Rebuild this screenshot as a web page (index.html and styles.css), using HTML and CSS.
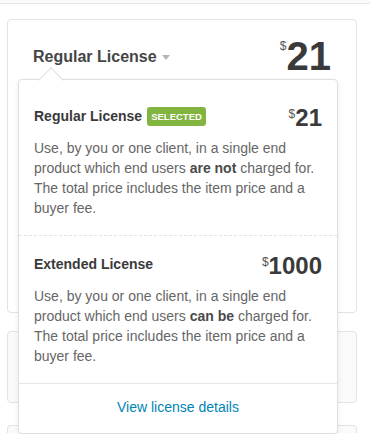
FILE: index.html
```html
<!DOCTYPE html>
<html lang="en">
<head>
    <meta charset="UTF-8">
    <meta name="viewport" content="width=device-width, initial-scale=1.0">
    <title>License picker</title>
    <link rel="stylesheet" href="styles.css">
</head>
<body>
    <div class="topbar"></div>
    <div class="page">
        <div class="card purchase">
            <div class="purchase-head">
                <div class="license-name">Regular License <span class="caret"></span></div>
                <div class="price big"><span class="cur">$</span>21</div>
            </div>
        </div>
        <div class="card muted first"></div>
        <div class="card muted last"></div>

        <!-- dropdown is open over the cards -->
        <div class="dropdown">
            <div class="option dashed">
                <div class="option-head">
                    <div class="option-title">Regular License <span class="badge">SELECTED</span></div>
                    <div class="price"><span class="cur">$</span>21</div>
                </div>
                <p class="option-desc">Use, by you or one client, in a single end product which end users <strong>are not</strong> charged for. The total price includes the item price and a buyer fee.</p>
            </div>
            <div class="option solid">
                <div class="option-head">
                    <div class="option-title">Extended License</div>
                    <div class="price"><span class="cur">$</span>1000</div>
                </div>
                <p class="option-desc">Use, by you or one client, in a single end product which end users <strong>can be</strong> charged for. The total price includes the item price and a buyer fee.</p>
            </div>
            <div class="dropdown-foot">
                <a href="#">View license details</a>
            </div>
        </div>
    </div>
</body>
</html>
```

FILE: styles.css
```css
* {
    box-sizing: border-box;
    margin: 0;
    padding: 0;
}
body {
    font-family: 'Liberation Sans', Arial, sans-serif;
    background: #ffffff;
    color: #454545;
    width: 370px;
    height: 434px;
    overflow: hidden;
}
.topbar {
    height: 4px;
    background: #fafafa;
    border-bottom: 1px solid #e8e8e8;
}
.page {
    position: relative;
    padding: 15px 13px 0 7px;
}
.card {
    border: 1px solid #dfe4ea;
    border-radius: 4px;
    background: #ffffff;
}
.purchase {
    height: 294px;
    padding: 16px 25px 0 25px;
}
.purchase-head {
    display: flex;
    justify-content: space-between;
    align-items: flex-start;
}
.license-name {
    font-size: 16px;
    font-weight: bold;
    line-height: 20px;
    margin-top: 11px;
    color: #454545;
}
.caret {
    display: inline-block;
    width: 0;
    height: 0;
    border-left: 4.5px solid transparent;
    border-right: 4.5px solid transparent;
    border-top: 5px solid #b5b5b5;
    margin-left: 1px;
    vertical-align: 2px;
}
.price {
    display: flex;
    align-items: flex-start;
    font-size: 24px;
    font-weight: bold;
    line-height: 24px;
    color: #3a3a3a;
}
.price .cur {
    font-size: 12px;
    font-weight: normal;
    line-height: 12px;
    color: #555555;
    margin-top: 2px;
}
.price.big {
    font-size: 40px;
    line-height: 40px;
}
.price.big .cur {
    margin-top: 4px;
}
.muted {
    background: #fafafa;
    height: 72px;
}
.muted.first {
    margin-top: 18px;
    margin-bottom: 22px;
}
.muted.last {
    height: 8px;
    border-bottom: none;
    border-radius: 4px 4px 0 0;
}

.dropdown {
    position: absolute;
    top: 75px;
    left: 18px;
    width: 320px;
    background: #ffffff;
    border: 1px solid #dcdfe3;
    border-radius: 4px;
    box-shadow: 0 2px 5px rgba(0, 0, 0, 0.08);
    padding-top: 8px;
}
.dropdown::before {
    content: "";
    position: absolute;
    top: -9.5px;
    left: 22.5px;
    width: 17px;
    height: 17px;
    background: #ffffff;
    border-top: 1px solid #dcdfe3;
    border-left: 1px solid #dcdfe3;
    transform: rotate(45deg);
}
.option {
    position: relative;
    padding: 18px 15px 17px 15px;
}
.option.dashed {
    border-bottom: 1px dashed #dfe4ea;
}
.option.solid {
    border-bottom: 1px solid #e3e7ec;
}
.option-head {
    display: flex;
    justify-content: space-between;
    align-items: flex-start;
}
.option-title {
    display: flex;
    align-items: center;
    gap: 5px;
    font-size: 14px;
    font-weight: bold;
    line-height: 20px;
    color: #3a3a3a;
}
.badge {
    display: inline-block;
    height: 19px;
    line-height: 19px;
    padding: 0 4px;
    background: #82b440;
    color: #ffffff;
    font-size: 9.5px;
    font-weight: bold;
    border-radius: 3px;
}
.option-desc {
    margin-top: 8px;
    font-size: 14px;
    line-height: 20px;
    color: #666666;
}
.option-desc strong {
    color: #4a4a4a;
}
.dropdown-foot {
    padding: 13px 0 16px 0;
    text-align: center;
    font-size: 14px;
    line-height: 20px;
}
.dropdown-foot a {
    color: #0084b4;
    text-decoration: none;
}
```
